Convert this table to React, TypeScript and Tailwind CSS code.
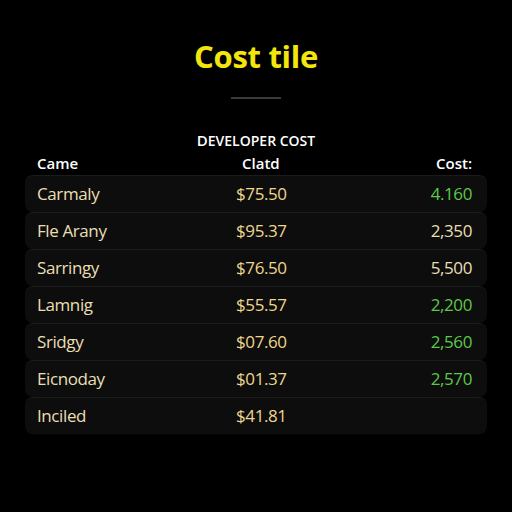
/* Cost tile — dark table with cream/green figures */

type Row = { name: string; price: string; cost: string; green: boolean };

const rows: Row[] = [
  { name: 'Carmaly', price: '$75.50', cost: '4.160', green: true },
  { name: 'Fle Arany', price: '$95.37', cost: '2,350', green: false },
  { name: 'Sarringy', price: '$76.50', cost: '5,500', green: false },
  { name: 'Lamnig', price: '$55.57', cost: '2,200', green: true },
  { name: 'Sridgy', price: '$07.60', cost: '2,560', green: true },
  { name: 'Eicnoday', price: '$01.37', cost: '2,570', green: true },
  { name: 'Inciled', price: '$41.81', cost: '', green: false },
];

export default function App() {
  return (
    <div className="w-[512px] h-[512px] bg-black overflow-hidden flex flex-col items-center" style={{ fontFamily: '"Open Sans", "Noto Sans", sans-serif' }}>
      <h1 className="mt-[37px] text-[31px] leading-[38px] font-bold text-[#f3e60c] tracking-[-0.3px]">Cost tile</h1>
      <div className="mt-[22px] w-[50px] h-[2px] bg-[#3a3a3a]" />

      <div className="mt-[32px] text-[14px] leading-[18px] font-semibold text-white tracking-[0px]">
        <span className="text-[15px]">D</span>EVELOPER COST
      </div>

      <div className="w-[462px] mt-[4px]">
        {/* header */}
        <div className="flex items-center h-[18px] px-[12px] text-[15px] font-semibold text-white">
          <span className="w-[175px]">Came</span>
          <span className="flex-1 pl-[30px]">Clatd</span>
          <span className="w-[100px] text-right pr-[3px]">Cost:</span>
        </div>

        <div className="mt-[3px] flex flex-col">
          {rows.map(r => (
            <div key={r.name} className="flex items-center h-[37px] px-[12px] rounded-[8px] bg-[#0d0d0d] border-t border-[#1b1b1b] shadow-[0_1px_0_#050505] text-[17px] tracking-[-0.4px]">
              <span className="w-[175px] text-[#eadfb4]">{r.name}</span>
              <span className="flex-1 pl-[24px] text-[#eed68f]">{r.price}</span>
              <span className={`w-[100px] text-right pr-[3px] ${r.green ? 'text-[#5cc94a]' : 'text-[#eadfb4]'}`}>{r.cost}</span>
            </div>
          ))}
        </div>
      </div>
    </div>
  );
}
